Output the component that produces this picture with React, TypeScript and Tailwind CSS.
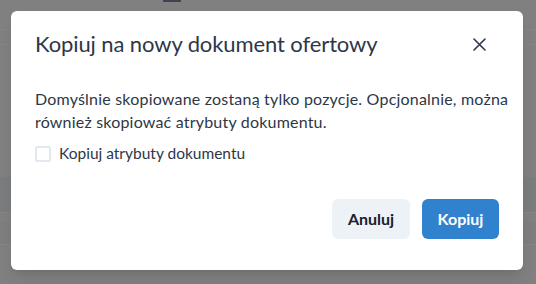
import React, { useState } from "react";

const font = { fontFamily: "Lato, 'Open Sans', sans-serif" };

function Backdrop() {
  return (
    <div className="absolute inset-0 bg-[#808080]">
      <div className="h-[30px] border-b border-[#858585] relative">
        <div className="absolute left-[163px] top-0 w-[18px] h-[2px] bg-[#3e4452]" />
      </div>
      <div className="h-[15px] border-b border-[#858585]" />
      <div className="h-[132px]" />
      <div className="h-[36px] bg-[#7b7c7e] border-b border-[#868686]" />
      <div className="h-[9px]" />
      <div className="h-[23px] border-b border-[#868686] bg-[#7e7e7e]" />
    </div>
  );
}

export default function App() {
  const [copyAttrs, setCopyAttrs] = useState(false);

  return (
    <div className="relative w-[536px] h-[284px] overflow-hidden" style={font}>
      <Backdrop />
      <div className="absolute left-[11px] top-[11px] w-[512px] h-[259px] bg-white rounded-md shadow-lg flex flex-col">
        <div className="flex items-center justify-between pl-6 pr-[36px] pt-[16px] pb-[14px]">
          <h2 className="text-[22px] leading-[34px] tracking-[-0.1px] text-[#2d3748] font-normal">
            Kopiuj na nowy dokument ofertowy
          </h2>
          <button className="w-[16px] h-[16px] flex items-center justify-center text-[#2d3748]">
            <svg width="13" height="13" viewBox="0 0 13 13" fill="none">
              <path
                d="M1 1L12 12M12 1L1 12"
                stroke="currentColor"
                strokeWidth="1.6"
                strokeLinecap="round"
              />
            </svg>
          </button>
        </div>

        <div className="pl-6 pr-3 pt-[12px] text-[16px] leading-[23px] text-[#2d3748]">
          <p className="whitespace-nowrap tracking-[0.2px]">
            Domyślnie skopiowane zostaną tylko pozycje. Opcjonalnie, można
            <br />
            również skopiować atrybuty dokumentu.
          </p>
          <label className="flex items-center gap-2 mt-[9px] cursor-pointer">
            <span
              onClick={() => setCopyAttrs(!copyAttrs)}
              className={`w-4 h-4 rounded-[2px] border-2 ${
                copyAttrs ? "bg-[#3182ce] border-[#3182ce]" : "border-[#e2e8f0] bg-white"
              }`}
            />
            <span className="text-[15.5px]">Kopiuj atrybuty dokumentu</span>
          </label>
        </div>

        <div className="mt-auto flex justify-end gap-3 px-6 pb-[31px]">
          <button className="h-10 w-[78px] rounded-md bg-[#edf2f7] text-[#1a202c] font-bold text-[16px]">
            Anuluj
          </button>
          <button className="h-10 w-[77px] rounded-md bg-[#3182ce] text-white font-bold text-[16px]">
            Kopiuj
          </button>
        </div>
      </div>
    </div>
  );
}
